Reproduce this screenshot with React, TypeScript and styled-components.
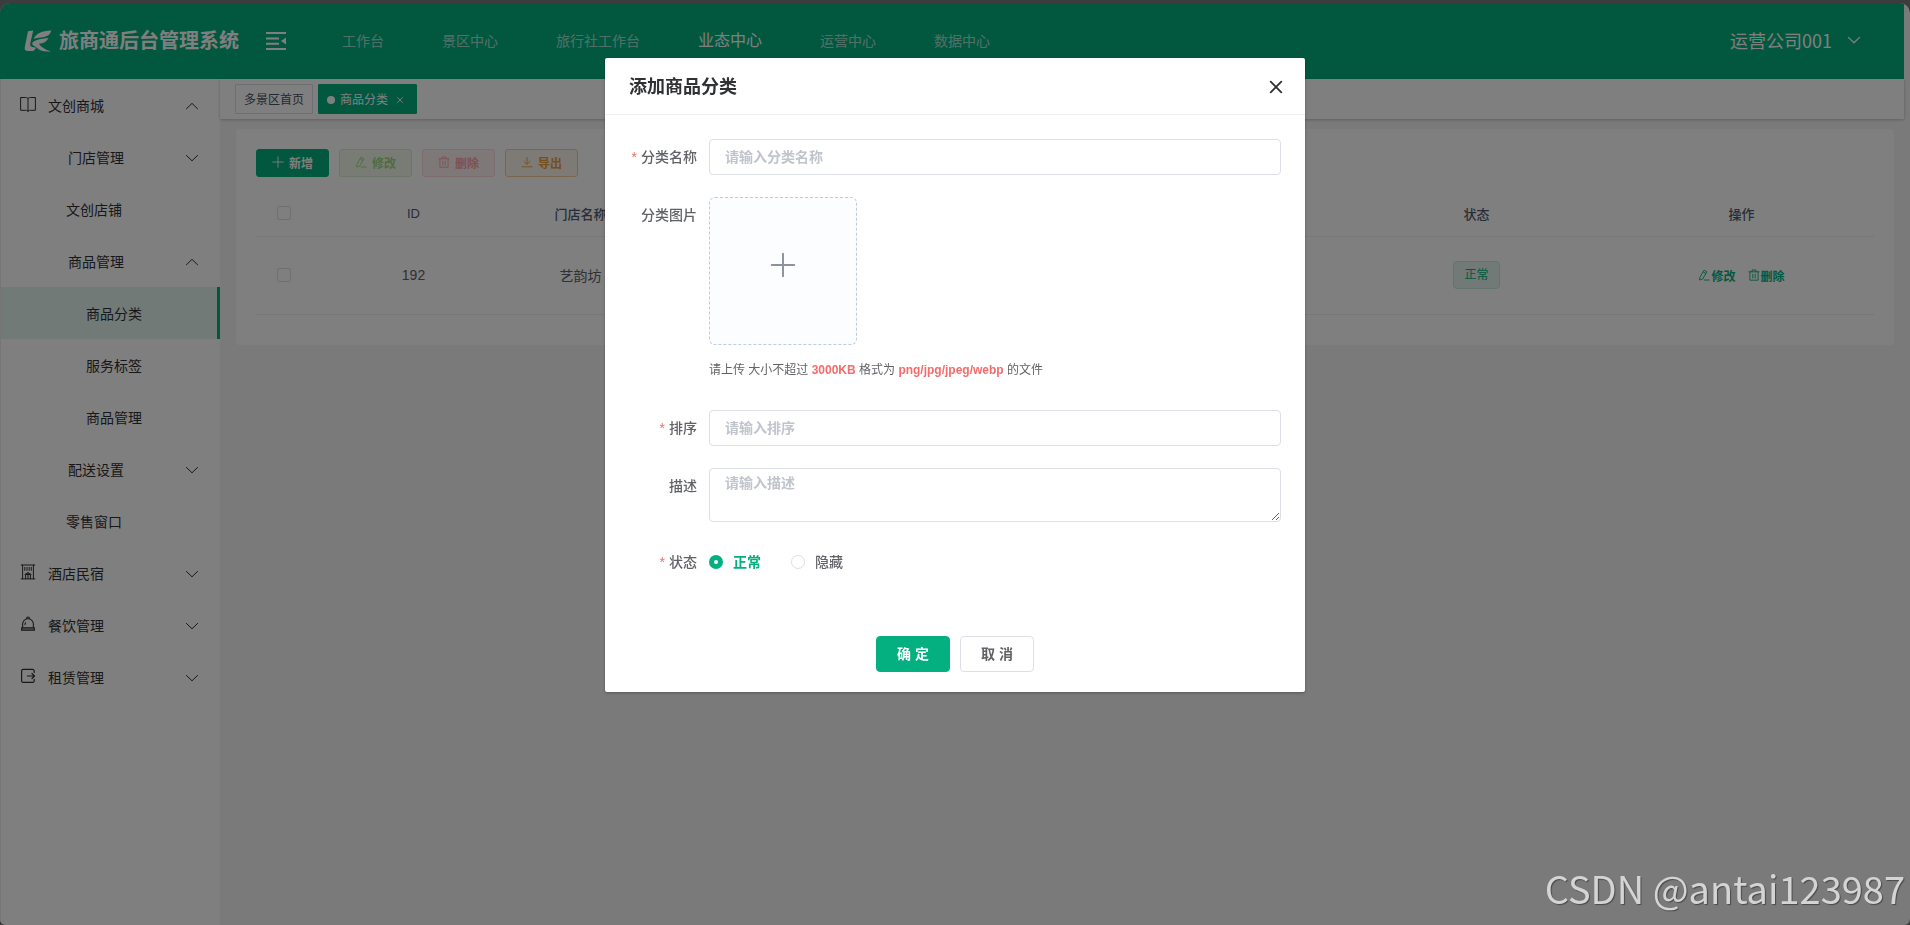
import React, { useState } from 'react';
import styled, { createGlobalStyle, css } from 'styled-components';

const primary = '#04b07f';

const GlobalStyle = createGlobalStyle`
  *, *::before, *::after { box-sizing: border-box; }
  body {
    margin: 0;
    background: #787878;
    color: #303133;
    font-family: "Liberation Sans", "Noto Sans CJK SC", sans-serif;
    font-size: 14px;
  }
  button, input, textarea { font-family: inherit; margin: 0; }
  button { cursor: pointer; }
  a { color: inherit; text-decoration: none; }
`;

/* ---------- icons ---------- */

const Svg = styled.svg<{ $size?: number; $square?: boolean }>`
  display: block;
  flex: none;
  width: ${(p) => p.$size ?? 16}px;
  height: ${(p) => p.$size ?? 16}px;
  fill: none;
  stroke: currentColor;
  stroke-linecap: ${(p) => (p.$square ? 'butt' : 'round')};
  stroke-linejoin: ${(p) => (p.$square ? 'miter' : 'round')};
`;

const Chevron = ({ up = false, stroke = 1 }: { up?: boolean; stroke?: number }) => (
  <Svg $size={14} viewBox="0 0 14 14" strokeWidth={stroke} aria-hidden="true">
    <path d={up ? 'M1.4 9.8 7 4.4l5.600 5.400' : 'M1.4 4.4 7 9.8l5.6-5.4'} />
  </Svg>
);

const PlusIcon = ({ size = 12, stroke = 0.9 }: { size?: number; stroke?: number }) => (
  <Svg $size={size} viewBox="0 0 12 12" strokeWidth={stroke} aria-hidden="true">
    <path d="M6 .8v10.4M.8 6h10.4" />
  </Svg>
);

const PenIcon = () => (
  <Svg $size={12} viewBox="0 0 12 12" strokeWidth="0.9" aria-hidden="true">
    <path d="M6.4 1.3 8.9 2.7 4.6 10.1 1.6 11 1.9 8.7zM5.4 3l2.5 1.5M6.2 11h5" />
  </Svg>
);

const TrashIcon = () => (
  <Svg $size={12} viewBox="0 0 12 12" strokeWidth="0.9" aria-hidden="true">
    <path d="M.9 2.8h10.2M4 2.8V1h4v1.8M1.9 2.8v8.4h8.2V2.8M4.8 5.2v3.8M7.2 5.2v3.8" />
  </Svg>
);

const DownloadIcon = () => (
  <Svg $size={12} viewBox="0 0 12 12" strokeWidth="0.9" aria-hidden="true">
    <path d="M6 1.3v6.9M2.9 5.3 6 8.3l3.1-3M1 10.8h10" />
  </Svg>
);

const CloseIcon = () => (
  <Svg $size={16} viewBox="0 0 16 16" strokeWidth="1.8" aria-hidden="true">
    <path d="m2.7 2.7 10.6 10.6M13.3 2.7 2.7 13.3" />
  </Svg>
);

const SmallCloseIcon = () => (
  <Svg $size={8} viewBox="0 0 8 8" strokeWidth="0.9" aria-hidden="true">
    <path d="m1.5 1.5 5 5M6.5 1.5l-5 5" />
  </Svg>
);

const FoldIcon = () => (
  <Svg $size={20} $square viewBox="0 0 20 20" strokeWidth="2" aria-hidden="true">
    <path d="M0 2h20M0 7.5h13M0 12.700h13M0 18h20" />
    <path d="m20 6.500-5 3.500 5 3.500z" fill="currentColor" stroke="none" />
  </Svg>
);

const LogoSvg = styled.svg`
  display: block;
  width: 28px;
  height: 22px;
  fill: currentColor;
`;

const Logo = () => (
  <LogoSvg viewBox="0 0 28 22" aria-hidden="true">
    <path d="M4 1.2 9.2.4 6.3 13.3c-.5 2.2.1 3.4 2 3.8l4 .7-2.9 3.2H4C1.3 21 .2 19.6.8 17z" />
    <path d="M9.6 8.8C12.8 3.3 17.5.9 27.3.6c-1 3.8-3.1 5.5-7.1 6.3-4 .7-7.2 1-10.6 1.9z" />
    <path d="M8.4 12.5c3.3-2.6 8.2-3.8 16.1-4.5-2 3.7-5.1 5.500-9.700 5.700 2.700 3.600 6.300 6.100 12 7.600-7 .6-11-.3-14.200-3.700L8.400 14.800z" />
  </LogoSvg>
);

const BookIcon = () => (
  <Svg $square viewBox="0 0 16 16" strokeWidth="1" aria-hidden="true">
    <path d="M.6 1.5h4.9C7 1.5 8 2 8 3c0-1 1-1.5 2.5-1.5h4.9v12.8h-4.9C9 14.3 8 14.7 8 15.5c0-.8-1-1.2-2.5-1.2H.6zM8 3v12.5" />
  </Svg>
);

const HotelIcon = () => (
  <Svg viewBox="0 0 16 16" strokeWidth="1" aria-hidden="true">
    <path d="M1.2 1h13.6M2.6 1v13.7M13.4 1v13.7M1.2 14.9h13.6M4.8 3.4v3M7 3.4v3M9.2 3.4v3M11.3 3.4v3M5.6 14.7v-4.2h4.8v4.2M8 9v5.5M4.900 10.400 8 8.600l3.100 1.800" />
  </Svg>
);

const DishIcon = () => (
  <Svg viewBox="0 0 16 16" strokeWidth="1.1" aria-hidden="true">
    <path d="M2.6 11.5V8.2a5.4 5.4 0 0 1 10.8 0v3.3M6.5 2.5c0-2 3-2 3 0M5 8.6c0-.7.2-1.3.6-1.8" />
    <path d="M1.6 11.7h12.8v2.5H1.6z" fill="currentColor" fillOpacity=".5" />
  </Svg>
);

const RentIcon = () => (
  <Svg viewBox="0 0 16 16" strokeWidth="1.2" aria-hidden="true">
    <path d="M14.2 4.4V3c0-1-.6-1.6-1.6-1.6H3.2c-1 0-1.6.6-1.6 1.6v9.8c0 1 .6 1.6 1.6 1.6h9.4c1 0 1.6-.6 1.6-1.6v-1.4M7.4 8h7M12 5.5 14.500 8 12 10.500" />
  </Svg>
);

/* ---------- shell ---------- */

const Shell = styled.div`
  display: flex;
  flex-direction: column;
  min-height: calc(100vh - 3px);
  margin-top: 3px;
  padding-right: 6px;
  background: #f5f5f5;
  border-radius: 10px 10px 6px 6px;
  overflow: hidden;
`;

const TopBar = styled.header`
  display: flex;
  align-items: center;
  height: 76px;
  padding: 0 43px 0 24px;
  background: ${primary};
  color: #fff;
`;

const Brand = styled.h1`
  display: flex;
  align-items: center;
  gap: 7px;
  margin: 0;
  font-size: 20px;
  line-height: 28px;
  font-weight: 700;
  white-space: nowrap;
`;

const IconButton = styled.button`
  display: flex;
  align-items: center;
  justify-content: center;
  padding: 0;
  border: 0;
  background: none;
  color: inherit;
`;

const FoldButton = styled(IconButton)`
  margin-left: 27px;
`;

const MainNav = styled.nav`
  display: flex;
  align-items: center;
  gap: 58px;
  flex: 1;
  margin-left: 56px;
`;

const NavLink = styled.a<{ $active?: boolean }>`
  font-size: ${(p) => (p.$active ? 16 : 14)}px;
  line-height: 24px;
  color: ${(p) => (p.$active ? '#fff' : 'rgba(255, 255, 255, 0.65)')};
  white-space: nowrap;
`;

const UserButton = styled(IconButton)`
  gap: 15px;
  padding-bottom: 2px;
  font-family: "Noto Sans CJK SC", sans-serif;
  font-size: 18px;
  line-height: 26px;
`;

const Body = styled.div`
  display: flex;
  flex: 1;
`;

const Sidebar = styled.nav`
  flex: none;
  width: 220px;
  background: #fff;
  border-left: 1px solid #ebebeb;
`;

const MenuList = styled.ul`
  margin: 0;
  padding: 0;
  list-style: none;
`;

const MenuItem = styled.a<{ $indent: number; $active?: boolean }>`
  display: flex;
  align-items: center;
  height: 52px;
  padding: 2px 21px 0 ${(p) => p.$indent}px;
  font-size: 14px;
  color: #303133;
  ${(p) =>
    p.$active &&
    css`
      background: #e2f4ef;
      border-right: 3px solid ${primary};
    `}
`;

const MenuIcon = styled.span`
  display: flex;
  margin-right: 12px;
  padding-bottom: 4px;
`;

const MenuText = styled.span`
  flex: 1;
  line-height: 20px;
`;

const Main = styled.div`
  display: flex;
  flex-direction: column;
  flex: 1;
  min-width: 0;
`;

const TagsBar = styled.div`
  display: flex;
  align-items: center;
  gap: 5px;
  height: 40px;
  padding: 0 15px;
  background: #fff;
  box-shadow: 0 1px 3px rgba(0, 0, 0, 0.2), 0 0 3px rgba(0, 0, 0, 0.05);
`;

const TagItem = styled.div<{ $active?: boolean }>`
  display: flex;
  align-items: center;
  height: 30px;
  padding: 2px 8px 0;
  border: 1px solid ${(p) => (p.$active ? primary : '#d8dce5')};
  border-radius: 1px;
  background: ${(p) => (p.$active ? primary : '#fff')};
  color: ${(p) => (p.$active ? '#fff' : '#495060')};
  font-size: 12px;
  line-height: 18px;
`;

const TagDot = styled.span`
  width: 8px;
  height: 8px;
  margin-right: 5px;
  border-radius: 50%;
  background: #fff;
`;

const TagClose = styled(IconButton)`
  width: 16px;
  height: 16px;
  margin-left: 4px;
`;

const Card = styled.section`
  margin: 10px 10px 0 16px;
  padding: 20px 20px 30px;
  border-radius: 4px;
  background: #fff;
`;

const Toolbar = styled.div`
  display: flex;
  gap: 10px;
`;

type Tone = 'primary' | 'success' | 'danger' | 'warning';

const tones: Record<Tone, { bg: string; border: string; text: string }> = {
  primary: { bg: primary, border: primary, text: '#fff' },
  success: { bg: '#f0f9eb', border: '#d9ecce', text: '#9fd77f' },
  danger: { bg: '#fef0f0', border: '#fbd9d9', text: '#f9a3a3' },
  warning: { bg: '#fdf6ec', border: '#f3cf9a', text: '#e6a23c' },
};

const ToolButton = styled.button<{ $tone: Tone }>`
  display: flex;
  align-items: center;
  justify-content: center;
  gap: 5px;
  width: 73px;
  height: 28px;
  padding: 0 0 2px;
  border: 1px solid ${(p) => tones[p.$tone].border};
  border-radius: 3px;
  background: ${(p) => tones[p.$tone].bg};
  color: ${(p) => tones[p.$tone].text};
  font-size: 12px;
  font-weight: 700;
`;

const Table = styled.table`
  width: 100%;
  margin-top: 14px;
  border-collapse: collapse;
  table-layout: fixed;
`;

const HeadCell = styled.th`
  height: 45px;
  padding: 0;
  border-bottom: 1px solid #ebeef5;
  color: #515a6e;
  font-size: 13px;
  font-weight: 500;
  text-align: center;
`;

const Cell = styled.td`
  height: 78px;
  padding: 0;
  border-bottom: 1px solid #ebeef5;
  color: #606266;
  font-size: 14px;
  text-align: center;
`;

const Checkbox = styled.input`
  appearance: none;
  display: block;
  width: 14px;
  height: 14px;
  margin: 0 auto;
  border: 1px solid #dcdfe6;
  border-radius: 2px;
  background: #fff;
`;

const StatusTag = styled.span`
  display: inline-block;
  height: 28px;
  padding: 0 10px;
  border: 1px solid #c6e9de;
  border-radius: 4px;
  background: #e2f4ef;
  color: ${primary};
  font-size: 12px;
  line-height: 26px;
`;

const RowActions = styled.div`
  display: flex;
  justify-content: center;
  gap: 12px;
`;

const RowAction = styled(IconButton)`
  gap: 1px;
  color: ${primary};
  font-size: 12px;
  font-weight: 700;
`;

/* ---------- dialog ---------- */

const Overlay = styled.div`
  position: fixed;
  inset: 0;
  display: flex;
  justify-content: center;
  align-items: flex-start;
  padding-top: 58px;
  background: rgba(0, 0, 0, 0.5);
`;

const Dialog = styled.div`
  width: 700px;
  max-width: 100%;
  border-radius: 2px;
  background: #fff;
  box-shadow: 0 1px 3px rgba(0, 0, 0, 0.3);
`;

const DialogHead = styled.div`
  display: flex;
  align-items: center;
  justify-content: space-between;
  height: 57px;
  padding: 2px 21px 0 24px;
  border-bottom: 1px solid #f0f0f0;
`;

const DialogTitle = styled.h2`
  margin: 0;
  color: #303133;
  font-size: 18px;
  line-height: 24px;
  font-weight: 700;
`;

const Form = styled.form`
  display: flex;
  flex-direction: column;
  gap: 22px;
  padding: 24px 24px 20px;
`;

const FormRow = styled.div`
  display: flex;
  align-items: flex-start;
`;

const labelStyle = css<{ $required?: boolean }>`
  flex: none;
  width: 80px;
  padding-right: 12px;
  color: #606266;
  font-size: 14px;
  line-height: 36px;
  font-weight: 500;
  text-align: right;
  white-space: nowrap;
  ${(p) =>
    p.$required &&
    css`
      &::before {
        content: '*';
        margin-right: 4px;
        color: #f56c6c;
      }
    `}
`;

const Label = styled.label<{ $required?: boolean }>`
  ${labelStyle}
`;

const GroupLabel = styled.span<{ $required?: boolean }>`
  ${labelStyle}
`;

const fieldStyle = css`
  display: block;
  flex: 1;
  min-width: 0;
  border: 1px solid #dcdfe6;
  border-radius: 4px;
  background: #fff;
  color: #606266;
  font-size: 14px;
  font-weight: 700;
  outline: none;
  &::placeholder { color: #c0c4cc; opacity: 1; }
  &:focus { border-color: ${primary}; }
`;

const TextInput = styled.input`
  ${fieldStyle}
  height: 36px;
  padding: 0 15px 1px;
`;

const TextArea = styled.textarea`
  ${fieldStyle}
  height: 54px;
  padding: 4px 15px;
  line-height: 21px;
  resize: vertical;
`;

const UploadBlock = styled.div`
  display: flex;
  flex-direction: column;
  gap: 14px;
`;

const UploadButton = styled.button`
  display: flex;
  align-items: center;
  justify-content: center;
  width: 148px;
  height: 148px;
  padding: 0 0 12px;
  border: 1px dashed #c0ccda;
  border-radius: 6px;
  background: #fbfdff;
  color: #8c939d;
`;

const UploadTip = styled.p`
  margin: 0;
  padding-bottom: 7px;
  color: #606266;
  font-size: 12px;
  line-height: 22px;
  strong { color: #f56c6c; }
`;

const RadioGroup = styled.div`
  display: flex;
  align-items: center;
  gap: 30px;
  height: 36px;
`;

const RadioLabel = styled.label<{ $checked: boolean }>`
  display: flex;
  align-items: center;
  gap: 10px;
  color: ${(p) => (p.$checked ? primary : '#606266')};
  font-weight: ${(p) => (p.$checked ? 700 : 500)};
  line-height: 20px;
`;

const Radio = styled.input`
  appearance: none;
  width: 14px;
  height: 14px;
  border: 1px solid #dcdfe6;
  border-radius: 50%;
  background: #fff;
  &:checked { border: 5px solid ${primary}; }
`;

const DialogActions = styled.div`
  display: flex;
  justify-content: center;
  gap: 10px;
  padding-top: 34px;
`;

const ActionButton = styled.button<{ $primary?: boolean }>`
  width: 74px;
  height: 36px;
  padding: 0 0 2px;
  border: 1px solid ${(p) => (p.$primary ? primary : '#dcdfe6')};
  border-radius: 4px;
  background: ${(p) => (p.$primary ? primary : '#fff')};
  color: ${(p) => (p.$primary ? '#fff' : '#606266')};
  font-size: 14px;
  font-weight: 700;
`;

const Watermark = styled.div`
  position: fixed;
  right: 5px;
  bottom: 13px;
  color: #d4d4d4;
  font-family: "Noto Sans CJK SC", sans-serif;
  font-size: 38px;
  line-height: 48px;
  text-shadow: 1px 1px 1px rgba(0, 0, 0, 0.4);
  pointer-events: none;
`;

/* ---------- data ---------- */

const navItems = ['工作台', '景区中心', '旅行社工作台', '业态中心', '运营中心', '数据中心'];

type MenuEntry = {
  text: string;
  indent: number;
  icon?: React.ReactNode;
  open?: boolean;
  active?: boolean;
};

const menu: MenuEntry[] = [
  { text: '文创商城', indent: 19, icon: <BookIcon />, open: true },
  { text: '门店管理', indent: 67, open: false },
  { text: '文创店铺', indent: 65 },
  { text: '商品管理', indent: 67, open: true },
  { text: '商品分类', indent: 85, active: true },
  { text: '服务标签', indent: 85 },
  { text: '商品管理', indent: 85 },
  { text: '配送设置', indent: 67, open: false },
  { text: '零售窗口', indent: 65 },
  { text: '酒店民宿', indent: 19, icon: <HotelIcon />, open: false },
  { text: '餐饮管理', indent: 19, icon: <DishIcon />, open: false },
  { text: '租赁管理', indent: 19, icon: <RentIcon />, open: false },
];

const statuses = ['正常', '隐藏'];

export default function App() {
  const [status, setStatus] = useState('正常');

  return (
    <>
      <GlobalStyle />
      <Shell>
        <TopBar>
          <Brand>
            <Logo />
            旅商通后台管理系统
          </Brand>
          <FoldButton type="button" aria-label="收起菜单">
            <FoldIcon />
          </FoldButton>
          <MainNav>
            {navItems.map((item) => (
              <NavLink key={item} href="#" $active={item === '业态中心'}>
                {item}
              </NavLink>
            ))}
          </MainNav>
          <UserButton type="button">
            运营公司001
            <Chevron stroke={1.3} />
          </UserButton>
        </TopBar>
        <Body>
          <Sidebar>
            <MenuList>
              {menu.map((entry, i) => (
                <li key={i}>
                  <MenuItem href="#" $indent={entry.indent} $active={entry.active}>
                    {entry.icon && <MenuIcon>{entry.icon}</MenuIcon>}
                    <MenuText>{entry.text}</MenuText>
                    {entry.open !== undefined && <Chevron up={entry.open} />}
                  </MenuItem>
                </li>
              ))}
            </MenuList>
          </Sidebar>
          <Main>
            <TagsBar>
              <TagItem>
                <a href="#">多景区首页</a>
              </TagItem>
              <TagItem $active>
                <TagDot />
                <a href="#">商品分类</a>
                <TagClose type="button" aria-label="关闭">
                  <SmallCloseIcon />
                </TagClose>
              </TagItem>
            </TagsBar>
            <Card>
              <Toolbar>
                <ToolButton type="button" $tone="primary"><PlusIcon />新增</ToolButton>
                <ToolButton type="button" $tone="success" disabled><PenIcon />修改</ToolButton>
                <ToolButton type="button" $tone="danger" disabled><TrashIcon />删除</ToolButton>
                <ToolButton type="button" $tone="warning"><DownloadIcon />导出</ToolButton>
              </Toolbar>
              <Table>
                <colgroup>
                  <col width="56" />
                  <col width="203" />
                  <col width="131" />
                  <col />
                  <col width="265" />
                  <col width="265" />
                </colgroup>
                <thead>
                  <tr>
                    <HeadCell><Checkbox type="checkbox" aria-label="全选" /></HeadCell>
                    <HeadCell>ID</HeadCell>
                    <HeadCell>门店名称</HeadCell>
                    <HeadCell />
                    <HeadCell>状态</HeadCell>
                    <HeadCell>操作</HeadCell>
                  </tr>
                </thead>
                <tbody>
                  <tr>
                    <Cell><Checkbox type="checkbox" aria-label="选择" /></Cell>
                    <Cell>192</Cell>
                    <Cell>艺韵坊</Cell>
                    <Cell />
                    <Cell><StatusTag>正常</StatusTag></Cell>
                    <Cell>
                      <RowActions>
                        <RowAction type="button"><PenIcon />修改</RowAction>
                        <RowAction type="button"><TrashIcon />删除</RowAction>
                      </RowActions>
                    </Cell>
                  </tr>
                </tbody>
              </Table>
            </Card>
          </Main>
        </Body>
      </Shell>

      <Overlay>
        <Dialog role="dialog" aria-modal="true" aria-labelledby="dialog-title">
          <DialogHead>
            <DialogTitle id="dialog-title">添加商品分类</DialogTitle>
            <IconButton type="button" aria-label="关闭">
              <CloseIcon />
            </IconButton>
          </DialogHead>
          <Form onSubmit={(e) => e.preventDefault()}>
            <FormRow>
              <Label htmlFor="name" $required>分类名称</Label>
              <TextInput id="name" type="text" placeholder="请输入分类名称" />
            </FormRow>
            <FormRow>
              <GroupLabel id="picture-label">分类图片</GroupLabel>
              <UploadBlock>
                <UploadButton type="button" aria-labelledby="picture-label">
                  <PlusIcon size={26} stroke={0.9} />
                </UploadButton>
                <UploadTip>
                  请上传 大小不超过 <strong>3000KB</strong> 格式为 <strong>png/jpg/jpeg/webp</strong> 的文件
                </UploadTip>
              </UploadBlock>
            </FormRow>
            <FormRow>
              <Label htmlFor="order" $required>排序</Label>
              <TextInput id="order" type="text" placeholder="请输入排序" />
            </FormRow>
            <FormRow>
              <Label htmlFor="description">描述</Label>
              <TextArea id="description" placeholder="请输入描述" />
            </FormRow>
            <FormRow>
              <GroupLabel id="status-label" $required>状态</GroupLabel>
              <RadioGroup role="radiogroup" aria-labelledby="status-label">
                {statuses.map((s) => (
                  <RadioLabel key={s} $checked={status === s}>
                    <Radio
                      type="radio"
                      name="status"
                      checked={status === s}
                      onChange={() => setStatus(s)}
                    />
                    {s}
                  </RadioLabel>
                ))}
              </RadioGroup>
            </FormRow>
            <DialogActions>
              <ActionButton type="submit" $primary>确 定</ActionButton>
              <ActionButton type="button">取 消</ActionButton>
            </DialogActions>
          </Form>
        </Dialog>
      </Overlay>
      <Watermark>CSDN @antai123987</Watermark>
    </>
  );
}
